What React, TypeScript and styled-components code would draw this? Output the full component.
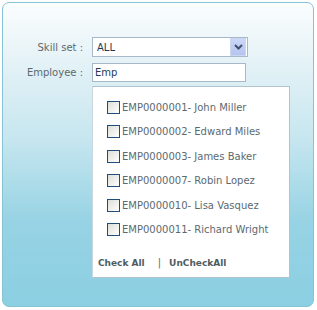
import React from "react";
import styled, { createGlobalStyle } from "styled-components";

const Global = createGlobalStyle`
  html, body { margin: 0; padding: 0; background: #ffffff; }
  body { font-family: "DejaVu Sans", Verdana, sans-serif; }
`;

const Panel = styled.div`
  box-sizing: border-box;
  margin: 2px 0 0 2px;
  width: 312px;
  height: 305px;
  border: 1px solid #86c3d4;
  border-radius: 7px;
  background: linear-gradient(180deg, #fbfdfe 0%, #e6f3f7 18%, #c6e6ef 45%, #97d3e4 72%, #8bcfe2 100%);
  padding: 34px 0 0 0;
`;

const Form = styled.div`
  display: grid;
  grid-template-columns: 80px auto;
  column-gap: 9px;
  row-gap: 6px;
  align-items: center;
  justify-items: start;
`;

const Label = styled.label`
  justify-self: end;
  font-size: 10px;
  color: #5b6a6e;
  white-space: nowrap;
`;

const SelectBox = styled.div`
  box-sizing: border-box;
  width: 156px;
  height: 20px;
  border: 1px solid #a7b9c9;
  background: #ffffff;
  display: flex;
  align-items: center;
  justify-content: space-between;
  padding: 0 1px 0 4px;
  font-size: 10px;
  color: #1d3c55;
`;

const ArrowButton = styled.span`
  box-sizing: border-box;
  width: 16px;
  height: 18px;
  border: 1px solid #cbd6f3;
  background: linear-gradient(180deg, #cbd7f7 0%, #b5c4ef 100%);
  display: flex;
  align-items: center;
  justify-content: center;
`;

const TextInput = styled.div`
  box-sizing: border-box;
  width: 154px;
  height: 19px;
  border: 1px solid #a7b9c9;
  background: #ffffff;
  display: flex;
  align-items: center;
  padding: 0 2px;
  font-size: 10px;
  color: #1d3c55;
`;

const ListCell = styled.div`
  grid-column: 2;
  margin-top: -2px;
`;

const ListBox = styled.div`
  box-sizing: border-box;
  width: 198px;
  height: 192px;
  border: 1px solid #b2c3cf;
  border-left-color: #c9d7df;
  background: #ffffff;
  padding: 14px 0 0 14px;
  display: flex;
  flex-direction: column;
`;

const Item = styled.div`
  display: flex;
  align-items: center;
  height: 13px;
  margin-bottom: 11.4px;
  font-size: 10px;
  color: #5c6a70;
  white-space: nowrap;
`;

const Box = styled.span`
  box-sizing: border-box;
  width: 13px;
  height: 13px;
  border: 1px solid #1f4e7c;
  background: linear-gradient(135deg, #dcdcd8 0%, #f0f0ee 55%, #ffffff 100%);
  margin-right: 2px;
  flex: none;
`;

const Actions = styled.div`
  display: flex;
  align-items: center;
  margin: 10px 0 0 -9px;
  font-size: 9px;
  color: #4e5c5e;
`;

const ActionLink = styled.span`
  font-weight: bold;
`;

const Sep = styled.span`
  margin: 0 8px 0 13px;
  font-size: 10px;
  color: #5c6a70;
`;

const employees = [
  "EMP0000001- John Miller",
  "EMP0000002- Edward Miles",
  "EMP0000003- James Baker",
  "EMP0000007- Robin Lopez",
  "EMP0000010- Lisa Vasquez",
  "EMP0000011- Richard Wright",
];

export default function App() {
  return (
    <>
      <Global />
      <Panel>
        <Form>
          <Label>Skill set :</Label>
          <SelectBox>
            <span>ALL</span>
            <ArrowButton>
              <svg width="9" height="6" viewBox="0 0 9 6">
                <path d="M1 1 L4.5 4.5 L8 1" fill="none" stroke="#3f5170" strokeWidth="2" />
              </svg>
            </ArrowButton>
          </SelectBox>
          <Label>Employee :</Label>
          <TextInput>Emp</TextInput>
          <ListCell>
            <ListBox>
              {employees.map((e) => (
                <Item key={e}>
                  <Box />
                  {e}
                </Item>
              ))}
              <Actions>
                <ActionLink>Check All</ActionLink>
                <Sep>|</Sep>
                <ActionLink>UnCheckAll</ActionLink>
              </Actions>
            </ListBox>
          </ListCell>
        </Form>
      </Panel>
    </>
  );
}
